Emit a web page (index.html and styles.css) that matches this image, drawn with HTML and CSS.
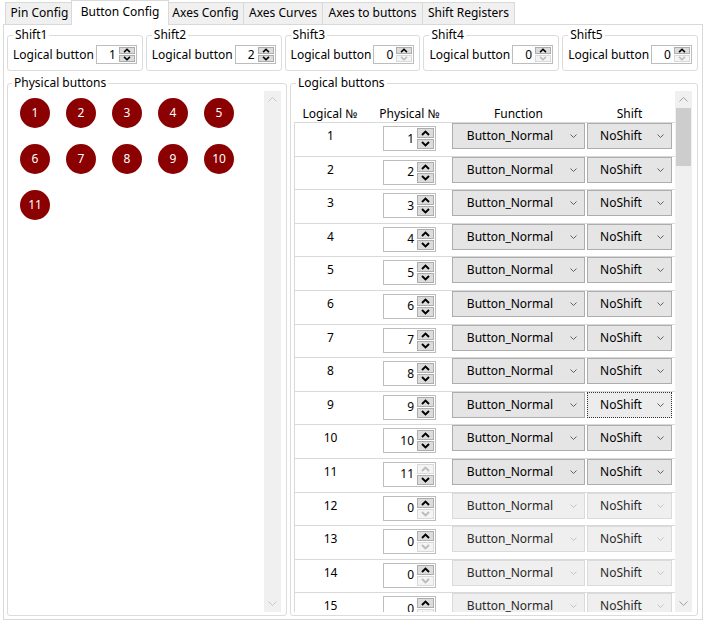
FILE: index.html
```html
<!DOCTYPE html>
<html>
<head>
<meta charset="utf-8">
<link rel="stylesheet" href="styles.css">
</head>
<body>
<svg class="defs" width="0" height="0">
  <symbol id="su" viewBox="0 0 9 6"><polyline points="1,5 4.5,1.5 8,5" fill="none" stroke="currentColor" stroke-width="1.9"/></symbol>
  <symbol id="sd" viewBox="0 0 9 6"><polyline points="1,1 4.5,4.5 8,1" fill="none" stroke="currentColor" stroke-width="1.9"/></symbol>
  <symbol id="cd" viewBox="0 0 7 4"><polyline points="0.5,0.5 3.5,3.5 6.5,0.5" fill="none" stroke="currentColor" stroke-width="1"/></symbol>
  <symbol id="au" viewBox="0 0 9 5"><polyline points="0.5,4.5 4.5,0.5 8.5,4.5" fill="none" stroke="currentColor" stroke-width="1"/></symbol>
  <symbol id="ad" viewBox="0 0 9 5"><polyline points="0.5,0.5 4.5,4.5 8.5,0.5" fill="none" stroke="currentColor" stroke-width="1"/></symbol>
</svg>
<div class="window">
  <div class="tabbar">
    <div class="tab t-pin">Pin Config</div>
    <div class="tab active">Button Config</div>
    <div class="tab t-axc">Axes Config</div>
    <div class="tab t-axcu">Axes Curves</div>
    <div class="tab t-axb">Axes to buttons</div>
    <div class="tab t-sr">Shift Registers</div>
  </div>
  <div class="pane">
    <div class="shifts">
      <fieldset class="group shift"><legend>Shift1</legend>
        <div class="shift-body"><span>Logical button</span>
          <div class="spin small"><span class="val">1</span><div class="btns"><span class="sb"><svg><use href="#su"/></svg></span><span class="sb"><svg><use href="#sd"/></svg></span></div></div>
        </div>
      </fieldset>
      <fieldset class="group shift"><legend>Shift2</legend>
        <div class="shift-body"><span>Logical button</span>
          <div class="spin small"><span class="val">2</span><div class="btns"><span class="sb"><svg><use href="#su"/></svg></span><span class="sb"><svg><use href="#sd"/></svg></span></div></div>
        </div>
      </fieldset>
      <fieldset class="group shift"><legend>Shift3</legend>
        <div class="shift-body"><span>Logical button</span>
          <div class="spin small"><span class="val">0</span><div class="btns"><span class="sb"><svg><use href="#su"/></svg></span><span class="sb dis"><svg><use href="#sd"/></svg></span></div></div>
        </div>
      </fieldset>
      <fieldset class="group shift"><legend>Shift4</legend>
        <div class="shift-body"><span>Logical button</span>
          <div class="spin small"><span class="val">0</span><div class="btns"><span class="sb"><svg><use href="#su"/></svg></span><span class="sb dis"><svg><use href="#sd"/></svg></span></div></div>
        </div>
      </fieldset>
      <fieldset class="group shift"><legend>Shift5</legend>
        <div class="shift-body"><span>Logical button</span>
          <div class="spin small"><span class="val">0</span><div class="btns"><span class="sb"><svg><use href="#su"/></svg></span><span class="sb dis"><svg><use href="#sd"/></svg></span></div></div>
        </div>
      </fieldset>
    </div>

    <div class="main">
      <fieldset class="group phys"><legend>Physical buttons</legend>
        <div class="gbody">
          <div class="circles">
            <div class="circle">1</div><div class="circle">2</div><div class="circle">3</div><div class="circle">4</div><div class="circle">5</div>
            <div class="circle">6</div><div class="circle">7</div><div class="circle">8</div><div class="circle">9</div><div class="circle">10</div>
            <div class="circle">11</div>
          </div>
          <div class="vscroll off">
            <span class="arr"><svg><use href="#au"/></svg></span>
            <span class="track"></span>
            <span class="arr"><svg><use href="#ad"/></svg></span>
          </div>
        </div>
      </fieldset>

      <fieldset class="group logical"><legend>Logical buttons</legend>
        <div class="gbody">
          <div class="list">
            <div class="head">
              <span class="c-l">Logical №</span>
              <span class="c-p">Physical №</span>
              <span class="c-f">Function</span>
              <span class="c-s">Shift</span>
            </div>
            <div class="rows">
              <div class="row"><span class="lnum">1</span><div class="spin"><span class="val">1</span><div class="btns"><span class="sb"><svg><use href="#su"/></svg></span><span class="sb"><svg><use href="#sd"/></svg></span></div></div><div class="combo func"><span class="ct">Button_Normal</span><svg><use href="#cd"/></svg></div><div class="combo shf"><span class="ct">NoShift</span><svg><use href="#cd"/></svg></div></div>
              <div class="row"><span class="lnum">2</span><div class="spin"><span class="val">2</span><div class="btns"><span class="sb"><svg><use href="#su"/></svg></span><span class="sb"><svg><use href="#sd"/></svg></span></div></div><div class="combo func"><span class="ct">Button_Normal</span><svg><use href="#cd"/></svg></div><div class="combo shf"><span class="ct">NoShift</span><svg><use href="#cd"/></svg></div></div>
              <div class="row"><span class="lnum">3</span><div class="spin"><span class="val">3</span><div class="btns"><span class="sb"><svg><use href="#su"/></svg></span><span class="sb"><svg><use href="#sd"/></svg></span></div></div><div class="combo func"><span class="ct">Button_Normal</span><svg><use href="#cd"/></svg></div><div class="combo shf"><span class="ct">NoShift</span><svg><use href="#cd"/></svg></div></div>
              <div class="row"><span class="lnum">4</span><div class="spin"><span class="val">4</span><div class="btns"><span class="sb"><svg><use href="#su"/></svg></span><span class="sb"><svg><use href="#sd"/></svg></span></div></div><div class="combo func"><span class="ct">Button_Normal</span><svg><use href="#cd"/></svg></div><div class="combo shf"><span class="ct">NoShift</span><svg><use href="#cd"/></svg></div></div>
              <div class="row"><span class="lnum">5</span><div class="spin"><span class="val">5</span><div class="btns"><span class="sb"><svg><use href="#su"/></svg></span><span class="sb"><svg><use href="#sd"/></svg></span></div></div><div class="combo func"><span class="ct">Button_Normal</span><svg><use href="#cd"/></svg></div><div class="combo shf"><span class="ct">NoShift</span><svg><use href="#cd"/></svg></div></div>
              <div class="row"><span class="lnum">6</span><div class="spin"><span class="val">6</span><div class="btns"><span class="sb"><svg><use href="#su"/></svg></span><span class="sb"><svg><use href="#sd"/></svg></span></div></div><div class="combo func"><span class="ct">Button_Normal</span><svg><use href="#cd"/></svg></div><div class="combo shf"><span class="ct">NoShift</span><svg><use href="#cd"/></svg></div></div>
              <div class="row"><span class="lnum">7</span><div class="spin"><span class="val">7</span><div class="btns"><span class="sb"><svg><use href="#su"/></svg></span><span class="sb"><svg><use href="#sd"/></svg></span></div></div><div class="combo func"><span class="ct">Button_Normal</span><svg><use href="#cd"/></svg></div><div class="combo shf"><span class="ct">NoShift</span><svg><use href="#cd"/></svg></div></div>
              <div class="row"><span class="lnum">8</span><div class="spin"><span class="val">8</span><div class="btns"><span class="sb"><svg><use href="#su"/></svg></span><span class="sb"><svg><use href="#sd"/></svg></span></div></div><div class="combo func"><span class="ct">Button_Normal</span><svg><use href="#cd"/></svg></div><div class="combo shf"><span class="ct">NoShift</span><svg><use href="#cd"/></svg></div></div>
              <div class="row"><span class="lnum">9</span><div class="spin"><span class="val">9</span><div class="btns"><span class="sb"><svg><use href="#su"/></svg></span><span class="sb"><svg><use href="#sd"/></svg></span></div></div><div class="combo func"><span class="ct">Button_Normal</span><svg><use href="#cd"/></svg></div><div class="combo shf focus"><span class="ct">NoShift</span><svg><use href="#cd"/></svg></div></div>
              <div class="row"><span class="lnum">10</span><div class="spin"><span class="val">10</span><div class="btns"><span class="sb"><svg><use href="#su"/></svg></span><span class="sb"><svg><use href="#sd"/></svg></span></div></div><div class="combo func"><span class="ct">Button_Normal</span><svg><use href="#cd"/></svg></div><div class="combo shf"><span class="ct">NoShift</span><svg><use href="#cd"/></svg></div></div>
              <div class="row"><span class="lnum">11</span><div class="spin"><span class="val">11</span><div class="btns"><span class="sb dis"><svg><use href="#su"/></svg></span><span class="sb"><svg><use href="#sd"/></svg></span></div></div><div class="combo func"><span class="ct">Button_Normal</span><svg><use href="#cd"/></svg></div><div class="combo shf"><span class="ct">NoShift</span><svg><use href="#cd"/></svg></div></div>
              <div class="row"><span class="lnum">12</span><div class="spin"><span class="val">0</span><div class="btns"><span class="sb"><svg><use href="#su"/></svg></span><span class="sb dis"><svg><use href="#sd"/></svg></span></div></div><div class="combo func dis"><span class="ct">Button_Normal</span><svg><use href="#cd"/></svg></div><div class="combo shf dis"><span class="ct">NoShift</span><svg><use href="#cd"/></svg></div></div>
              <div class="row"><span class="lnum">13</span><div class="spin"><span class="val">0</span><div class="btns"><span class="sb"><svg><use href="#su"/></svg></span><span class="sb dis"><svg><use href="#sd"/></svg></span></div></div><div class="combo func dis"><span class="ct">Button_Normal</span><svg><use href="#cd"/></svg></div><div class="combo shf dis"><span class="ct">NoShift</span><svg><use href="#cd"/></svg></div></div>
              <div class="row"><span class="lnum">14</span><div class="spin"><span class="val">0</span><div class="btns"><span class="sb"><svg><use href="#su"/></svg></span><span class="sb dis"><svg><use href="#sd"/></svg></span></div></div><div class="combo func dis"><span class="ct">Button_Normal</span><svg><use href="#cd"/></svg></div><div class="combo shf dis"><span class="ct">NoShift</span><svg><use href="#cd"/></svg></div></div>
              <div class="row"><span class="lnum">15</span><div class="spin"><span class="val">0</span><div class="btns"><span class="sb"><svg><use href="#su"/></svg></span><span class="sb dis"><svg><use href="#sd"/></svg></span></div></div><div class="combo func dis"><span class="ct">Button_Normal</span><svg><use href="#cd"/></svg></div><div class="combo shf dis"><span class="ct">NoShift</span><svg><use href="#cd"/></svg></div></div>
            </div>
          </div>
          <div class="vscroll">
            <span class="arr"><svg><use href="#au"/></svg></span>
            <span class="track"><span class="thumb"></span></span>
            <span class="arr"><svg><use href="#ad"/></svg></span>
          </div>
        </div>
      </fieldset>
    </div>
  </div>
</div>
</body>
</html>
```
FILE: styles.css
```css
* { box-sizing: border-box; }
html, body { margin: 0; padding: 0; background: #fff; }
body { font-family: "Noto Sans", sans-serif; font-size: 12px; line-height: 16px; color: #000; }
.defs { display: none; }

.window { width: 706px; height: 624px; padding: 0 3px 4px 3px; display: flex; flex-direction: column; overflow: hidden; }

.tabbar { display: flex; align-items: flex-end; height: 24px; padding-left: 2px; flex: none; }
.tab { height: 22px; line-height: 20px; text-align: center; border: 1px solid #d9d9d9; border-bottom: none; background: #f0f0f0; margin-left: -1px; white-space: nowrap; flex: none; }
.tab:first-child { margin-left: 0; }
.t-pin { width: 69px; }
.t-axc { width: 77px; }
.t-axcu { width: 80px; }
.t-axb { width: 101px; }
.t-sr { width: 93px; }
.tab.active { width: 98px; height: 25px; line-height: 22px; margin: 0 -1px -1px -3px; background: #fff; position: relative; z-index: 1; }

.pane { flex: 1; border: 1px solid #d9d9d9; padding: 0 4px 3px 3px; display: flex; flex-direction: column; min-height: 0; }

.group { border: 1px solid #dcdcdc; border-radius: 3px; margin: 0; min-width: 0; }
.group > legend { padding: 0 2px; line-height: 16px; }

.shifts { display: flex; gap: 3px; margin-top: 2px; flex: none; }
.shift { flex: 1; padding: 2px 5px 6px 5px; }
.shift-body { display: flex; align-items: center; justify-content: space-between; white-space: nowrap; }

.spin { display: flex; border: 1px solid #bdbdbd; background: #fff; flex: none; }
.spin .val { flex: 1; text-align: right; padding-right: 3px; align-self: center; }
.spin .btns { display: flex; flex-direction: column; gap: 1px; padding: 1px 1px 1px 0; }
.sb { flex: 1; background: #dcdcdc; border: 1px solid #adadad; display: flex; align-items: center; justify-content: center; color: #000; }
.sb svg { width: 9px; height: 6px; }
.sb.dis { background: #f4f4f4; border-color: #d9d9d9; color: #bcbcbc; }
.spin.small { width: 41px; height: 19px; }
.spin.small .btns { width: 17px; }
.spin.small .sb svg { width: 8px; height: 5px; }

.main { flex: 1; display: flex; gap: 3px; margin-top: 4px; min-height: 0; }
.phys { width: 280px; flex: none; padding: 0 5px 3px 4px; }
.logical { flex: 1; padding: 0 5px 3px 3px; }
.logical > legend { margin-left: 2px; }
.gbody { display: flex; height: 521px; }

.circles { flex: 1; display: grid; grid-template-columns: repeat(5, 30px); grid-auto-rows: 30px; gap: 16px; align-content: start; padding: 7px 0 0 8px; }
.circle { width: 30px; height: 30px; border-radius: 50%; background: #8b0000; color: #fff; display: flex; align-items: center; justify-content: center; }

.vscroll { width: 17px; flex: none; background: #f0f0f0; display: flex; flex-direction: column; color: #a0a0a0; }
.vscroll.off { color: #c8c8c8; }
.vscroll .arr { height: 17px; display: flex; align-items: center; justify-content: center; }
.vscroll .arr svg { width: 9px; height: 5px; }
.vscroll .track { flex: 1; display: flex; flex-direction: column; }
.thumb { height: 58px; margin: 0 1px; background: #cdcdcd; }

.list { flex: 1; display: flex; flex-direction: column; min-width: 0; }
.head { height: 31px; display: flex; align-items: flex-end; flex: none; white-space: nowrap; }
.head span { display: flex; justify-content: center; }
.c-l { width: 72px; }
.c-p { width: 53px; margin-left: 17px; }
.c-f { width: 133px; margin-left: 16px; }
.c-s { width: 85px; margin-left: 2px; }

.rows { flex: 1; overflow: hidden; }
.row { height: 33.6px; display: flex; align-items: flex-start; border-left: 1px solid #d9d9d9; border-top: 1px solid #d9d9d9; }
.lnum { width: 71px; text-align: center; flex: none; margin-top: 5px; }
.row .spin { width: 53px; height: 25px; margin-left: 17px; margin-top: 3px; }
.row .spin .btns { width: 18px; }

.combo { height: 26px; border: 1px solid #adadad; background: #e5e5e5; display: flex; align-items: center; padding-left: 5px; flex: none; white-space: nowrap; }
.combo .ct { flex: 1; text-align: center; }
.combo svg { width: 7px; height: 4px; margin: 0 7px 0 8px; color: #606060; }
.func { width: 133px; margin-left: 16px; }
.shf { width: 85px; margin-left: 2px; }
.combo.dis { background: #efefef; border-color: #dadada; color: #2a2a2a; }
.combo.dis svg { color: #c4c4c4; }
.combo.focus { border: 1px dotted #333; background: #ececec; }
```
